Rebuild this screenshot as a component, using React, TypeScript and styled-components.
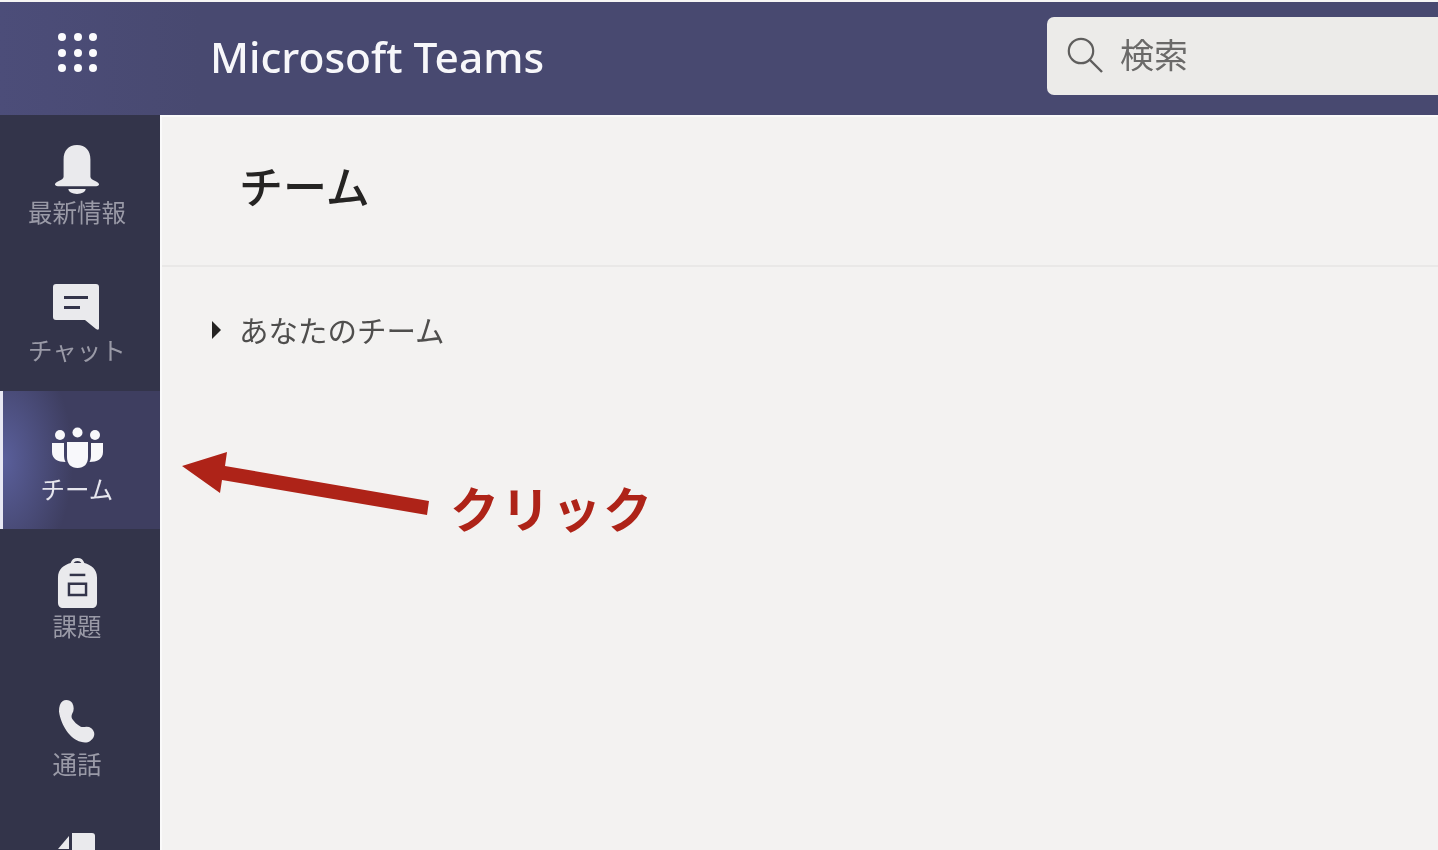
import React from "react";
import styled, { createGlobalStyle } from "styled-components";

const GlobalStyle = createGlobalStyle`
  html, body {
    margin: 0;
    height: 100%;
    overflow: hidden;
    background: #f3f2f1;
  }
  * {
    box-sizing: border-box;
  }
`;

const jpFont = `"Noto Sans CJK JP", "Noto Sans", sans-serif`;

const Page = styled.div`
  position: relative;
  display: flex;
  flex-direction: column;
  height: 850px;
  overflow: hidden;
  padding-top: 2px;
  background: #f6f5f4;
  font-family: ${jpFont};
`;

const Header = styled.header`
  display: flex;
  align-items: center;
  flex: 0 0 113px;
  background: linear-gradient(90deg, #4c4d79 0, #484970 200px);
`;

const Launcher = styled.div`
  display: grid;
  grid-template-columns: repeat(3, 8px);
  gap: 7.5px;
  width: 210px;
  padding: 0 0 12px 58px;
  filter: blur(0.4px);
`;

const Dot = styled.span`
  width: 8px;
  height: 8px;
  border-radius: 50%;
  background: #fbfbfd;
`;

const Title = styled.div`
  flex: 0 0 837px;
  padding-bottom: 4px;
  font-family: "Noto Sans", sans-serif;
  font-size: 42.5px;
  font-weight: 500;
  color: #f7f7fa;
  filter: blur(0.6px);
`;

const SearchBox = styled.div`
  display: flex;
  align-items: center;
  gap: 17px;
  flex: 1;
  height: 78px;
  margin-top: -5px;
  padding: 0 0 2px 20px;
  border-radius: 7px 0 0 7px;
  background: #ecebe9;
  font-size: 34px;
  color: #6b6a69;
`;

const SearchText = styled.span`
  margin-top: -3px;
  filter: blur(0.7px);
`;

const Body = styled.div`
  display: flex;
  flex: 1;
  min-height: 0;
`;

const Rail = styled.nav`
  flex: 0 0 160px;
  background: #33344a;
`;

const RailItem = styled.div<{ $active?: boolean }>`
  display: flex;
  flex-direction: column;
  align-items: center;
  height: 137.9px;
  padding: ${(p) => (p.$active ? "34px 9px 0 0" : "28px 6px 0 0")};
  border-left: ${(p) => (p.$active ? "3px solid #e8e8f4" : "none")};
  background: ${(p) =>
    p.$active
      ? "radial-gradient(ellipse 70px 120px at 0 50%, #5a5f9b 0, #3e3e60 100%)"
      : "transparent"};
`;

const IconSlot = styled.div<{ $active?: boolean }>`
  display: flex;
  align-items: center;
  justify-content: center;
  height: ${(p) => (p.$active ? "45px" : "52px")};
  filter: blur(0.4px);
`;

const RailLabel = styled.div<{ $active?: boolean }>`
  margin-top: ${(p) => (p.$active ? "1px" : "-1px")};
  font-size: 24.5px;
  line-height: 36px;
  white-space: nowrap;
  color: ${(p) => (p.$active ? "#e6e6ee" : "#9a9aa7")};
  filter: blur(0.7px);
`;

const Main = styled.main`
  display: flex;
  flex-direction: column;
  flex: 1;
  border-left: 2px solid #fafafa;
  border-top: 2px solid #fafafa;
  background: #f3f2f1;
`;

const PageHead = styled.div`
  display: flex;
  align-items: center;
  flex: 0 0 150px;
  padding: 0 0 12px 77px;
  border-bottom: 2px solid #e9e8e7;
`;

const Heading = styled.h1`
  margin: 0;
  font-size: 44px;
  font-weight: 500;
  line-height: 60px;
  color: #252423;
  filter: blur(0.6px);
`;

const TeamsRow = styled.div`
  display: flex;
  align-items: center;
  gap: 18px;
  padding: 44px 0 0 50px;
`;

const Caret = styled.span`
  width: 0;
  height: 0;
  border-top: 9px solid transparent;
  border-bottom: 9px solid transparent;
  border-left: 9px solid #252423;
`;

const TeamsLabel = styled.span`
  margin-top: -2px;
  font-size: 29.5px;
  line-height: 40px;
  white-space: nowrap;
  color: #4f4e4d;
  filter: blur(0.6px);
`;

const ArrowMark = styled.svg`
  position: absolute;
  left: 170px;
  top: 440px;
`;

const ClickNote = styled.div`
  position: absolute;
  left: 450px;
  top: 472px;
  font-size: 49px;
  font-weight: 700;
  line-height: 70px;
  letter-spacing: 2px;
  white-space: nowrap;
  color: #ae2318;
`;

const BellIcon = () => (
  <svg width="46" height="50" viewBox="0 0 48 52">
    <path
      fill="#eaeaed"
      d="M24 1c-9 0-14 6-14 15v18c0 2-2 3-6 5-2 1-3 2-3 3s1 2 3 2h40c2 0 3-1 3-2s-1-2-3-3c-4-2-6-3-6-5V16C38 7 33 1 24 1z"
    />
    <path fill="#eaeaed" d="M15 47h18c0 3-4 5-9 5s-9-2-9-5z" />
  </svg>
);

const ChatIcon = () => (
  <svg width="48" height="47" viewBox="1 0 48 47">
    <path
      fill="#eaeaed"
      d="M4 1h40c2 0 3 1 3 3v41c0 2-1 2-3 1L33 37H4c-2 0-3-1-3-3V4c0-2 1-3 3-3z"
    />
    <rect x="12" y="13" width="24" height="3" fill="#33344a" />
    <rect x="12" y="23" width="16" height="3" fill="#33344a" />
  </svg>
);

const TeamIcon = () => (
  <svg width="51" height="41" viewBox="0 0 51 41">
    <g fill="#f8f8fb">
      <circle cx="8" cy="8" r="5" />
      <circle cx="25.5" cy="5.5" r="5" />
      <circle cx="43" cy="8" r="5" />
      <path d="M0 16h12v12c0 3 .5 5 1.500 7C6 35 0 32 0 25z" />
      <path d="M39 16h12v9c0 7-6 10-13.500 10 1-2 1.500-4 1.500-7z" />
      <path d="M15 15h21v15c0 7-4 11-10.500 11S15 37 15 30z" />
    </g>
  </svg>
);

const BagIcon = () => (
  <svg width="41" height="51" viewBox="0 0 42 52">
    <path
      fill="#eaeaed"
      fillRule="evenodd"
      d="M21 1c-4 0-6 2-7 5-7 2-13 6-13 15v26c0 3 2 5 4 5h32c2 0 4-2 4-5V21c0-9-6-13-13-15-1-3-3-5-7-5zm0 3c2 0 3 1 4 2h-8c1-1 2-2 4-2z"
    />
    <rect x="13" y="17" width="16" height="2.500" fill="#33344a" />
    <path
      fill="#33344a"
      fillRule="evenodd"
      d="M11 26h20v14H11zm2.500 2.500v9h15v-9z"
    />
  </svg>
);

const PhoneIcon = () => (
  <svg width="36" height="46" viewBox="0 0 38 46">
    <path
      fill="#eaeaed"
      d="M4 2c3-2 8-1 10 2 2 4 2 8 0 11-1 2-1 4 0 6 2 3 5 6 9 8 2 1 4 0 6 0 4 0 7 2 8 6 1 4-1 7-4 9-3 2-6 2-10 1C12 42 2 28 0 13 0 8 1 4 4 2z"
    />
  </svg>
);

const FileIcon = () => (
  <svg width="38" height="52" viewBox="0 0 38 52">
    <path fill="#eaeaed" d="M14 1h20c2 0 3 1 3 3v48H14z" />
    <path fill="#eaeaed" d="M11 4v13H0z" />
  </svg>
);

const SearchIcon = () => (
  <svg width="36" height="36" viewBox="0 0 36 36" fill="none">
    <circle cx="14" cy="14" r="12.2" stroke="#5f5e5d" strokeWidth="2.2" />
    <path d="M23 23l12 12" stroke="#5f5e5d" strokeWidth="2.4" />
  </svg>
);

// the last item runs off the bottom of the window, only its icon shows
const railItems = [
  { id: "activity", label: "最新情報", icon: <BellIcon /> },
  { id: "chat", label: "チャット", icon: <ChatIcon /> },
  { id: "teams", label: "チーム", icon: <TeamIcon />, active: true },
  { id: "tasks", label: "課題", icon: <BagIcon /> },
  { id: "calls", label: "通話", icon: <PhoneIcon /> },
  { id: "files", icon: <FileIcon /> },
];

function App() {
  return (
    <Page>
      <GlobalStyle />
      <Header>
        <Launcher>
          {Array.from({ length: 9 }).map((_, i) => (
            <Dot key={i} />
          ))}
        </Launcher>
        <Title>Microsoft Teams</Title>
        <SearchBox>
          <SearchIcon />
          <SearchText>検索</SearchText>
        </SearchBox>
      </Header>
      <Body>
        <Rail>
          {railItems.map((item) => (
            <RailItem key={item.id} $active={item.active}>
              <IconSlot $active={item.active}>{item.icon}</IconSlot>
              {item.label && (
                <RailLabel $active={item.active}>{item.label}</RailLabel>
              )}
            </RailItem>
          ))}
        </Rail>
        <Main>
          <PageHead>
            <Heading>チーム</Heading>
          </PageHead>
          <TeamsRow>
            <Caret />
            <TeamsLabel>あなたのチーム</TeamsLabel>
          </TeamsRow>
        </Main>
      </Body>
      <ArrowMark width="270" height="90" viewBox="0 0 270 90">
        <path
          fill="#ae2318"
          d="M12 26L57 12 55 26 259 61 257 75 52 40 50 53z"
        />
      </ArrowMark>
      <ClickNote>クリック</ClickNote>
    </Page>
  );
}

export default App;
